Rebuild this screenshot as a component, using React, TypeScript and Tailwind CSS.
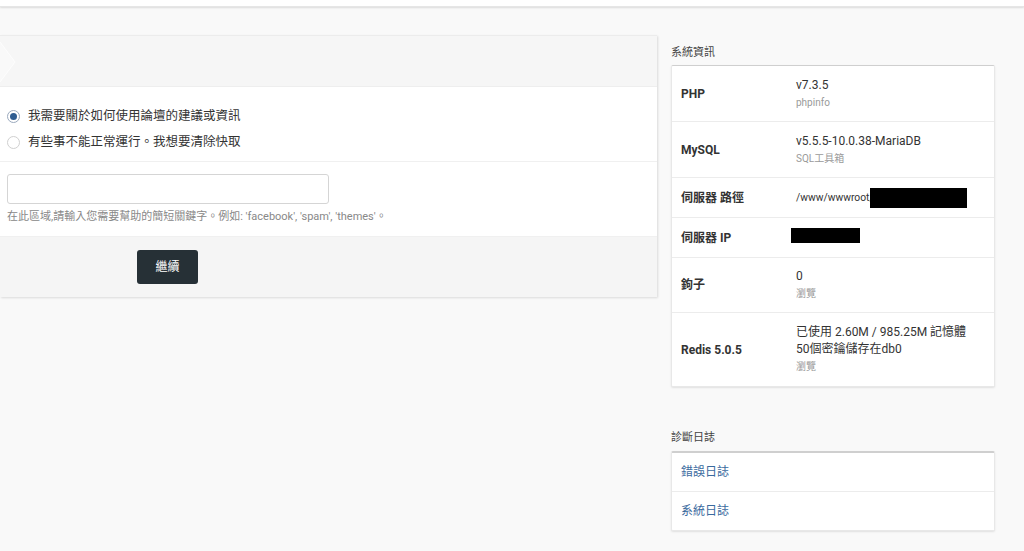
import React from "react";

const font = { fontFamily: "Roboto, 'Noto Sans CJK TC', sans-serif" };

function Row({ label, children, h }: { label: string; children: React.ReactNode; h: string }) {
  return (
    <div className={`flex items-center border-b border-[#ececec] last:border-b-0 ${h}`}>
      <div className="w-[124px] pl-[9px] text-[12px] font-bold text-[#333]">{label}</div>
      <div className="flex-1 text-[12px] text-[#333] leading-[17px]">{children}</div>
    </div>
  );
}

export default function App() {
  return (
    <div className="w-[1024px] h-[551px] bg-[#f9f9f9] overflow-hidden relative" style={font}>
      <div className="h-[7px] bg-white shadow-[0_1px_2px_rgba(0,0,0,0.12)] border-b border-[#e6e6e6]" />
      <div className="flex items-start pt-[28px]">
        {/* left panel */}
        <div className="w-[657px] bg-white border-t border-[#ececec] shadow-[1px_1px_2px_rgba(0,0,0,0.12)]">
          <div className="h-[51px] bg-[#f6f6f6] border-b border-[#eeeeee] relative">
            <svg className="absolute left-0 top-[6px]" width="16" height="40" viewBox="0 0 16 40">
              <path d="M0 0 L15 20 L0 40" fill="#f9f9f9" stroke="#fdfdfd" strokeWidth="1" />
            </svg>
          </div>
          <div className="pt-[16px]">
            <label className="flex items-center h-[26px] pl-[7px] text-[12.5px] text-[#333]">
              <span className="w-[13px] h-[13px] rounded-full border border-[#9aa9bd] flex items-center justify-center mr-[8px]">
                <span className="w-[7px] h-[7px] rounded-full bg-[#2f5d91]" />
              </span>
              我需要關於如何使用論壇的建議或資訊
            </label>
            <label className="flex items-center h-[26px] pl-[7px] text-[12.5px] text-[#333]">
              <span className="w-[13px] h-[13px] rounded-full border border-[#d0d0d0] mr-[8px]" />
              有些事不能正常運行。我想要清除快取
            </label>
            <div className="mt-[6px] border-t border-[#f0f0f0] pt-[12px] pb-[10px] pl-[7px]">
              <div className="w-[322px] h-[30px] border border-[#d5d5d5] rounded-[3px] bg-white" />
              <div className="mt-[5px] text-[11px] text-[#888]">
                在此區域,請輸入您需要幫助的簡短關鍵字。例如: 'facebook', 'spam', 'themes'。
              </div>
            </div>
          </div>
          <div className="h-[61px] bg-[#f5f5f5] border-t border-[#f0f0f0] pl-[137px] pt-[13px]">
            <button className="w-[61px] h-[34px] rounded-[3px] bg-[#263036] text-white text-[12px]">繼續</button>
          </div>
        </div>

        {/* right column */}
        <div className="ml-[14px] w-[324px] -mt-[3px]">
          <div className="text-[11px] text-[#444] h-[16px] leading-[16px] mt-[13px]">系統資訊</div>
          <div className="mt-[4px] bg-white border border-[#e8e8e8] border-t-[#cfcfcf] shadow-[0_1px_2px_rgba(0,0,0,0.1)] rounded-[2px]">
            <Row label="PHP" h="h-[56px]">
              <div>v7.3.5</div>
              <div className="text-[10px] text-[#9a9a9a]">phpinfo</div>
            </Row>
            <Row label="MySQL" h="h-[56px]">
              <div>v5.5.5-10.0.38-MariaDB</div>
              <div className="text-[10px] text-[#9a9a9a]">SQL工具箱</div>
            </Row>
            <Row label="伺服器 路徑" h="h-[40px]">
              <div className="flex items-center text-[10.3px]">
                <span>/www/wwwroot/</span>
                <span className="inline-block w-[97px] h-[20px] bg-black -ml-[4px]" />
              </div>
            </Row>
            <Row label="伺服器 IP" h="h-[40px]">
              <span className="inline-block w-[69px] h-[15px] bg-black -ml-[5px] -mt-[4px] align-middle" />
            </Row>
            <Row label="鉤子" h="h-[55px]">
              <div>0</div>
              <div className="text-[10px] text-[#9a9a9a]">瀏覽</div>
            </Row>
            <Row label="Redis 5.0.5" h="h-[73px]">
              <div>已使用 2.60M / 985.25M 記憶體</div>
              <div>50個密鑰儲存在db0</div>
              <div className="text-[10px] text-[#9a9a9a]">瀏覽</div>
            </Row>
          </div>

          <div className="text-[11px] text-[#444] h-[16px] leading-[16px] mt-[43px]">診斷日誌</div>
          <div className="mt-[5px] bg-white border border-[#e8e8e8] border-t-[#cfcfcf] border-t-2 shadow-[0_1px_2px_rgba(0,0,0,0.1)] rounded-[2px]">
            <div className="h-[39px] flex items-center pl-[9px] text-[12px] text-[#3a6a9e] border-b border-[#ececec]">錯誤日誌</div>
            <div className="h-[38px] flex items-center pl-[9px] text-[12px] text-[#3a6a9e]">系統日誌</div>
          </div>
        </div>
      </div>
    </div>
  );
}
